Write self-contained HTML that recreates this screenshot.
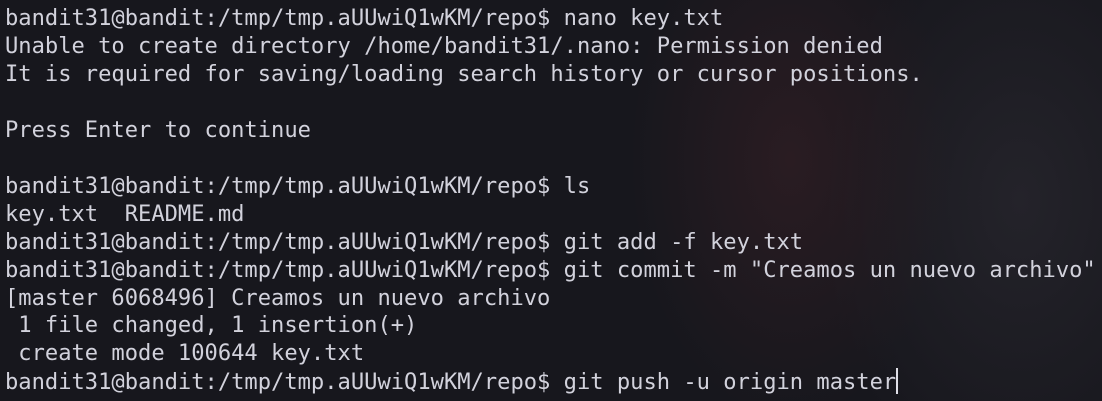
<!DOCTYPE html>
<html><head><meta charset="utf-8"><style>
html,body{margin:0;padding:0;}
body{width:1102px;height:401px;overflow:hidden;position:relative;
background:radial-gradient(ellipse 160px 260px at 790px 160px,#2a1c22 0%,rgba(30,20,26,0) 100%),radial-gradient(ellipse 200px 300px at 1020px 200px,#24232a 0%,rgba(0,0,0,0) 100%),#17171d;}
pre{margin:0;position:absolute;left:5px;top:5px;font-family:"DejaVu Sans Mono","Liberation Mono",monospace;font-size:22.1px;line-height:27.95px;color:#d2d2dc;}
.cur{display:inline-block;width:2px;height:26px;background:#e0e0e8;vertical-align:-5px;}
</style></head><body><pre>bandit31@bandit:/tmp/tmp.aUUwiQ1wKM/repo$ nano key.txt
Unable to create directory /home/bandit31/.nano: Permission denied
It is required for saving/loading search history or cursor positions.

Press Enter to continue

bandit31@bandit:/tmp/tmp.aUUwiQ1wKM/repo$ ls
key.txt  README.md
bandit31@bandit:/tmp/tmp.aUUwiQ1wKM/repo$ git add -f key.txt
bandit31@bandit:/tmp/tmp.aUUwiQ1wKM/repo$ git commit -m "Creamos un nuevo archivo"
[master 6068496] Creamos un nuevo archivo
 1 file changed, 1 insertion(+)
 create mode 100644 key.txt
bandit31@bandit:/tmp/tmp.aUUwiQ1wKM/repo$ git push -u origin master<span class="cur"></span></pre></body></html>
